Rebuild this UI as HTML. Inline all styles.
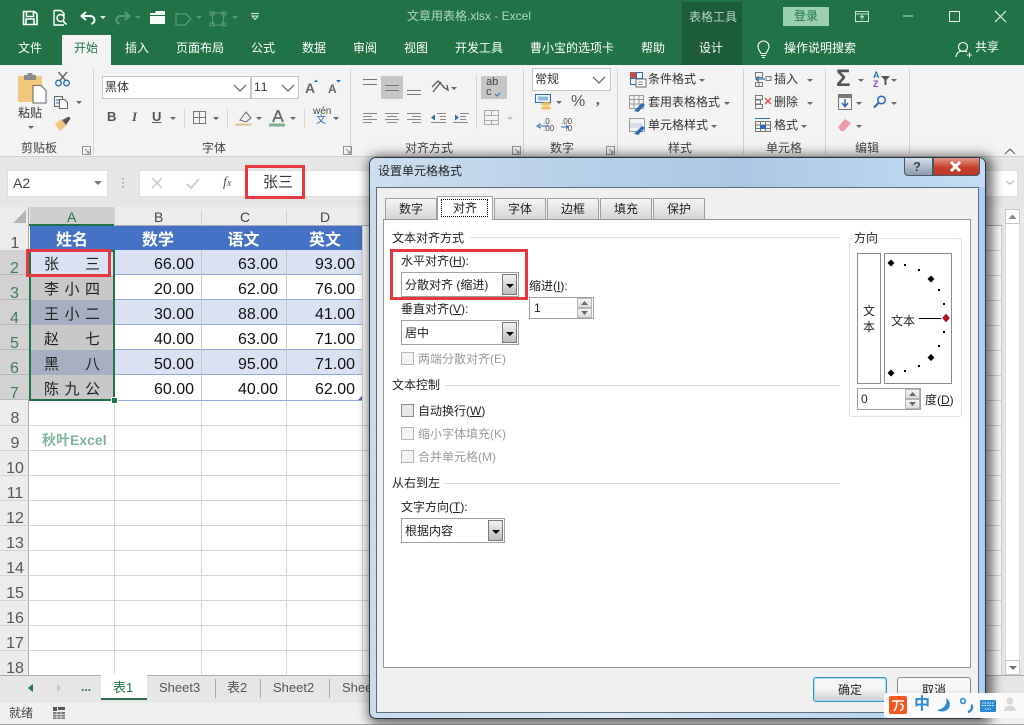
<!DOCTYPE html>
<html lang="zh"><head><meta charset="utf-8"><title>文章用表格.xlsx - Excel</title>
<style>
*{box-sizing:border-box;margin:0;padding:0}
html,body{width:1024px;height:725px;overflow:hidden;background:#fff}
body{position:relative;font:12px/16px "Liberation Sans","Noto Sans CJK SC",sans-serif;color:#333}
.t{position:absolute;white-space:nowrap}
.b{position:absolute}
svg{position:absolute;left:0;top:0;overflow:visible}
.g{position:absolute;background:#d4d4d4}
.tab{color:#fff;font-size:12px;top:40px}
.rl{top:140px;color:#444}
.rh{position:absolute;left:0;width:30px;text-align:center;font-size:16px;line-height:18px;color:#555}
.rh.s{color:#3f7a5c;background:#d2d2d2;border-bottom:1px solid #b8b8b8;width:29px}
.n{position:absolute;font-size:16px;line-height:20px;text-align:right;color:#111;width:60px}
.nm{position:absolute;left:44px;width:56px;font-size:15px;line-height:20px;color:#222;display:flex;justify-content:space-between}
.h{position:absolute;top:231px;font-size:16px;line-height:20px;color:#fff;font-weight:bold;text-align:center}
.dtab{position:absolute;top:198px;height:21px;width:52px;border:1px solid #9aa0a4;border-bottom:0;background:linear-gradient(#f5f5f5,#d6d6d6);text-align:center;line-height:20px;color:#222}
.d{color:#222}
.dis{color:#9a9a9a}
.sel{position:absolute;background:#fff;border:1px solid #a0a0a0;line-height:24px;padding-left:3px;color:#222}
.sel i{position:absolute;right:1px;top:1px;bottom:1px;width:15px;border:1px solid #777;background:linear-gradient(#f2f2f2,#bdbdbd)}
.sel i:after{content:"";position:absolute;left:3px;top:9px;border:4px solid transparent;border-top:4px solid #000;border-bottom:0}
.cb{position:absolute;left:401px;width:13px;height:13px;border:1px solid #b5b5b5;background:#f4f4f4}
.ln{position:absolute;height:1px;background:#dcdcdc}
u{text-decoration:underline}
</style></head><body>

<!-- Title bar -->
<div class="b" style="left:0;top:0;width:1024px;height:65px;background:#217346"></div>
<div class="b" style="left:682px;top:2px;width:60px;height:63px;background:#1d5c39"></div>
<div class="b" style="left:62px;top:35px;width:49px;height:30px;background:#f3f3f3"></div>
<div class="b" style="left:783px;top:7px;width:46px;height:19px;background:#9bd0ad"></div>
<div class="t" style="left:407px;top:8px;color:#b4d6c3">文章用表格.xlsx - Excel</div>
<div class="t" style="left:689px;top:9px;color:#b4d6c3">表格工具</div>
<div class="t" style="left:794px;top:8px;color:#217346">登录</div>
<div class="t tab" style="left:18px">文件</div>
<div class="t tab" style="left:74px;color:#217346">开始</div>
<div class="t tab" style="left:125px">插入</div>
<div class="t tab" style="left:176px">页面布局</div>
<div class="t tab" style="left:251px">公式</div>
<div class="t tab" style="left:302px">数据</div>
<div class="t tab" style="left:353px">审阅</div>
<div class="t tab" style="left:404px">视图</div>
<div class="t tab" style="left:455px">开发工具</div>
<div class="t tab" style="left:530px">曹小宝的选项卡</div>
<div class="t tab" style="left:641px">帮助</div>
<div class="t tab" style="left:699px">设计</div>
<div class="t tab" style="left:784px">操作说明搜索</div>
<div class="t tab" style="left:975px;top:39px">共享</div>

<!-- Ribbon -->
<div class="b" style="left:0;top:65px;width:1024px;height:92px;background:#f3f3f3;border-bottom:1px solid #d0d0d0"></div>
<div class="b" style="left:0;top:157px;width:1024px;height:50px;background:#e6e6e6"></div>
<div class="b" style="left:102px;top:76px;width:149px;height:23px;background:#fff;border:1px solid #c6c6c6"></div>
<div class="b" style="left:251px;top:76px;width:48px;height:23px;background:#fff;border:1px solid #c6c6c6"></div>
<div class="b" style="left:381px;top:76px;width:22px;height:23px;background:#c6c6c6"></div>
<div class="b" style="left:481px;top:76px;width:26px;height:23px;background:#c6c6c6"></div>
<div class="b" style="left:532px;top:68px;width:79px;height:23px;background:#fff;border:1px solid #c6c6c6"></div>
<div class="t" style="left:105px;top:79px">黑体</div>
<div class="t" style="left:254px;top:79px;letter-spacing:1px">11</div>
<div class="t" style="left:535px;top:71px">常规</div>
<div class="t" style="left:18px;top:105px">粘贴</div>
<div class="t" style="left:648px;top:71px">条件格式</div>
<div class="t" style="left:648px;top:94px">套用表格格式</div>
<div class="t" style="left:648px;top:117px">单元格样式</div>
<div class="t" style="left:774px;top:71px">插入</div>
<div class="t" style="left:774px;top:94px">删除</div>
<div class="t" style="left:774px;top:117px">格式</div>
<div class="t rl" style="left:21px">剪贴板</div>
<div class="t rl" style="left:202px">字体</div>
<div class="t rl" style="left:405px">对齐方式</div>
<div class="t rl" style="left:550px">数字</div>
<div class="t rl" style="left:668px">样式</div>
<div class="t rl" style="left:766px">单元格</div>
<div class="t rl" style="left:855px">编辑</div>
<div class="t" style="left:107px;top:109px;font:bold 13px/16px 'Liberation Sans';color:#555">B</div>
<div class="t" style="left:132px;top:109px;font:italic bold 13px/16px 'Liberation Serif';color:#555">I</div>
<div class="t" style="left:152px;top:109px;font:bold 13px/16px 'Liberation Sans';color:#555;text-decoration:underline">U</div>
<div class="t" style="left:305px;top:80px;font:bold 14px/16px 'Liberation Sans';color:#666">A</div>
<div class="t" style="left:328px;top:81px;font:bold 12px/16px 'Liberation Sans';color:#666">A</div>
<div class="t" style="left:313px;top:107px;font:10px/10px 'Liberation Sans';color:#444">wén</div>
<div class="t" style="left:316px;top:116px;font-size:10px;line-height:10px;color:#2a6cb0">文</div>
<div class="t" style="left:486px;top:77px;font:11px/10px 'Liberation Sans';color:#444">ab</div>
<div class="t" style="left:486px;top:87px;font:11px/10px 'Liberation Sans';color:#444">c</div>
<div class="t" style="left:571px;top:93px;font:16px/18px 'Liberation Sans';color:#555">%</div>
<div class="t" style="left:596px;top:91px;font:bold 15px/18px 'Liberation Serif';color:#555">,</div>
<div class="t" style="left:543px;top:118px;font:8px/7px 'Liberation Sans';color:#444">.0<br>.00</div>
<div class="t" style="left:561px;top:118px;font:8px/7px 'Liberation Sans';color:#444">.00<br>&nbsp;&nbsp;.0</div>
<div class="t" style="left:836px;top:68px;font:bold 24px/22px 'Liberation Sans';color:#555">Σ</div>
<div class="t" style="left:873px;top:71px;font:bold 9px/8px 'Liberation Sans';color:#2a6cb0">A</div>
<div class="t" style="left:873px;top:80px;font:bold 9px/8px 'Liberation Sans';color:#8a4fb0">Z</div>

<svg width="1024" height="725" viewBox="0 0 1024 725" fill="none">
<defs><path id="dd" d="M0 0h6l-3 3z" fill="#666"/><path id="dw" d="M0 0h6l-3 3z" fill="#dfeee6"/><path id="dg" d="M0 0h6l-3 3z" fill="#5c9a78"/><path id="ch" d="M0 0l6 6 6-6" stroke="#555" stroke-width="1.1"/></defs>
<!-- QAT -->
<path d="M23.500 11.500h11l2.500 2.500v10.500h-13.500zM26.500 12v4.500h7V12M26 24v-5h8v5" stroke="#fff" stroke-width="1.600"/>
<path d="M54 10.500h7l3 3v3M54 10.500v14.500h10" stroke="#fff" stroke-width="1.400"/><circle cx="60.500" cy="18" r="3.500" stroke="#fff" stroke-width="1.500"/><path d="M63 21l3.500 3.500" stroke="#fff" stroke-width="1.800"/>
<path d="M86 12l-4.500 4 4.500 4M82 16h8c3 0 4.500 2 4.500 4s-1 3-3 4" stroke="#fff" stroke-width="2"/><use href="#dw" x="100" y="16"/>
<path d="M125 12l4.500 4-4.500 4M129 16h-8c-3 0-4.500 2-4.500 4s1 3 3 4" stroke="#5c9a78" stroke-width="2"/><use href="#dg" x="135" y="16"/>
<path d="M150 13h5l1-2h9v13h-15z" fill="#f4fbf7"/><path d="M150 15.500h15" stroke="#217346"/>
<path d="M176 14h10l5 5-6 6h-9z" stroke="#5c9a78" stroke-width="1.300"/><use href="#dg" x="196" y="16"/>
<path d="M212 13h12l-1 12h-10zM210 12h4v3h-4zM222 12h4v3h-4zM210 23h4v3h-4zM222 23h4v3h-4z" stroke="#5c9a78"/><use href="#dg" x="232" y="16"/>
<path d="M251 13.500h8" stroke="#dfeee6" stroke-width="1"/><path d="M252 16h6l-3 3.500z" stroke="#dfeee6"/>
<!-- window controls -->
<path d="M855.500 11.500h13v10h-13zM855.500 14h13M862 20v-4M860 17.500l2-2 2 2" stroke="#cfe3d7"/>
<path d="M903 16h10" stroke="#cfe3d7"/><path d="M949.500 11.500h10v10h-10z" stroke="#e8f2ec"/>
<path d="M995 11l11 11M1006 11l-11 11" stroke="#e8f2ec" stroke-width="1.200"/>
<!-- bulb -->
<path d="M761 53.500c-.5-2-3-3.500-3-7a5.500 5.500 0 0 1 11 0c0 3.500-2.500 5-3 7zM761 55.500h5M762 57.500h3" stroke="#fff" stroke-width="1.100"/>
<!-- person -->
<circle cx="963" cy="47" r="4.500" stroke="#fff" stroke-width="1.100"/><path d="M956 57c.5-4 3-6 7-6 1.500 0 3 .5 4 1M967 55h5M969.500 52.500v5" stroke="#fff" stroke-width="1.100"/>
<!-- separators -->
<path d="M93.500 69v85M350.500 69v85M523.500 69v85M617.500 69v85M743.500 69v85M825.500 69v85M909.500 69v85" stroke="#d2d2d2"/>
<path d="M184.500 108v20M227.500 108v20M304.500 108v20M476.500 74v55" stroke="#d8d8d8"/>
<!-- launchers -->
<path d="M82.500 146.500h8v8h-8zM85 149l4 4M89 150.500v2.500h-2.500M343.500 146.500h8v8h-8zM346 149l4 4M350 150.500v2.500h-2.500M512.500 146.500h8v8h-8zM515 149l4 4M519 150.500v2.500h-2.500M606.500 146.500h8v8h-8zM609 149l4 4M613 150.500v2.500h-2.500" stroke="#777" stroke-width=".8"/>
<path d="M1005 154l5-5 5 5" stroke="#555"/>
<!-- paste -->
<path d="M18 76h24v26H18z" fill="#f0c77d"/><path d="M24 75h12v5H24zM27.500 73h5v3h-5z" fill="#8a8a8a"/><path d="M33 85.500h8l5 5v12.500H33z" fill="#fff" stroke="#666"/><use href="#dd" x="28" y="126"/>
<!-- cut -->
<path d="M58.500 72l7 8.500M67 72l-7 8.500" stroke="#666" stroke-width="1.400"/><circle cx="58.500" cy="83" r="2.800" stroke="#2a6cb0" stroke-width="1.300"/><circle cx="66.500" cy="83" r="2.800" stroke="#2a6cb0" stroke-width="1.300"/>
<!-- copy -->
<path d="M54.500 96.500h8v10h-8z" stroke="#666" fill="#f3f3f3"/><path d="M59.500 99.500h5l3 3v6h-8z" stroke="#666" fill="#fff"/><path d="M56 100h3M56 103h3" stroke="#2a6cb0"/><use href="#dd" x="76" y="101"/>
<!-- brush -->
<path d="M55 124.500l6-5.500 6 6-7 6z" fill="#f0c77d"/><path d="M62 120l7-3.500 1.500 2-4.500 6.500z" fill="#555"/>
<!-- combos -->
<use href="#ch" x="234" y="85"/><use href="#ch" x="282" y="85"/><use href="#ch" x="593" y="77"/>
<path d="M314 82l2-2.500 2 2.500z" fill="#2a6cb0"/><path d="M336 80h5l-2.500 2.500z" fill="#2a6cb0"/>
<use href="#dd" x="170" y="117"/><path d="M193.500 111.500h12v12h-12zM199.500 111.500v12M193.500 117.500h12" stroke="#777"/><use href="#dd" x="213" y="117"/>
<path d="M240 120l6-8 5 6-5 4zM236 125h14" stroke="#666"/><path d="M235 123.500h17v2h-17z" fill="#f0c77d" opacity=".7"/><use href="#dd" x="256" y="117"/>
<path d="M273 122l4.500-11h1l4.500 11M275 118h6" stroke="#666" stroke-width="1.800"/><path d="M269 123.500h16v3h-16z" fill="#7fb090"/><use href="#dd" x="290" y="117"/><use href="#dd" x="333" y="117"/>
<!-- alignment -->
<path d="M363 79.500h14M363 84.500h14M385 85.500h14M385 90.500h14M407 90.500h14M407 94.500h14" stroke="#777"/>
<path d="M433 92l8-10M432 87l6-6 6 6M443 87l5 3-1-5" stroke="#555" stroke-width="1.300"/><use href="#dd" x="451" y="87"/>
<path d="M363 113.500h14M363 116.500h9M363 119.500h14M363 122.500h9M385 113.500h14M387 116.500h10M385 119.500h14M387 122.500h10M407 113.500h14M412 116.500h9M407 119.500h14M412 122.500h9" stroke="#888"/>
<path d="M437 113.500h9M440 116.500h6M440 119.500h6M431 122.500h15M460 113.500h9M460 116.500h6M460 119.500h6M453 122.500h15" stroke="#888"/>
<path d="M431 117.500l4-3v6z" fill="#2a6cb0"/><path d="M459 117.500l-4-3v6z" fill="#2a6cb0"/>
<path d="M484.500 110.500h14v14h-14zM484.500 115.500h14M484.500 120.500h14M491.500 110.500v5M491.500 120.500v4" stroke="#aaa"/>
<path d="M507 117h6l-3 3z" fill="#bbb"/>
<path d="M495 94l2 2 3-3" stroke="#2a6cb0"/>
<!-- number -->
<path d="M535.500 94.500h15v8h-15z" stroke="#2a6cb0"/><path d="M538 96.500h10v4h-10z" fill="#8fb8dc"/><ellipse cx="546" cy="104" rx="5" ry="1.800" fill="#f0c060"/><ellipse cx="546" cy="108" rx="5" ry="1.800" fill="#f0c060"/><use href="#dd" x="556" y="101"/>
<path d="M541 126h7M537 126l3-2v4zM547 127" stroke="#2a6cb0"/><path d="M561 127h7l-2-2M568 127l-2 2" stroke="#2a6cb0"/>
<!-- styles -->
<path d="M630 72h6v6h-6z" fill="#c0504d"/><path d="M636.500 72.500h6v6h-6zM630.500 78.500h6v6h-6z" stroke="#2a6cb0"/><path d="M636 79h10v8h-10z" fill="#fff" stroke="#666"/><path d="M638 82h5M638 84.500h5" stroke="#666" stroke-width=".8"/>
<path d="M629.500 95.500h14v13h-14zM629.500 99.500h14M629.500 104h14M634 95.500v13M639 95.500v13" stroke="#999"/><path d="M634 111l8-8 3 2-7 7z" fill="#2a6cb0"/>
<path d="M629.500 118.500h15v13h-15z" stroke="#999"/><path d="M630 123h12v5h-12z" fill="#d6dfe8"/><path d="M634 134l8-8 3 2-7 7z" fill="#2a6cb0"/>
<use href="#dd" x="699" y="79"/><use href="#dd" x="724" y="102"/><use href="#dd" x="711" y="125"/>
<!-- cells -->
<path d="M755.500 72.500h7v5h-7zM755.500 82.500h7v4h-7zM755.500 82v4M766 76.500h5v4h-5zM759 86.500v-4" stroke="#777"/><path d="M756 79h9M759 76.500l-3 2.500 3 2.500" stroke="#2a6cb0" stroke-width="1.200"/>
<path d="M755.500 95.500h7v4h-7zM755.500 104.500h7v4h-7zM755.500 100h5v4h-5z" stroke="#777"/><path d="M765 98l6 6M771 98l-6 6" stroke="#e05050" stroke-width="1.400"/>
<path d="M755.500 121.500h15v10h-15zM755.500 125h15M755.500 128.500h15M760.500 121.500v10M765.500 121.500v10" stroke="#777"/><path d="M760 125h6v4h-6z" fill="#2a6cb0"/><path d="M755 118.500h15" stroke="#2a6cb0"/>
<use href="#dd" x="807" y="79"/><use href="#dd" x="807" y="102"/><use href="#dd" x="801" y="125"/>
<!-- edit -->
<use href="#dd" x="858" y="79"/><path d="M881 76h9l-3.500 4v5h-2v-5z" fill="#555"/><use href="#dd" x="891" y="79"/>
<path d="M838.500 94.500h13v15h-13z" stroke="#777"/><path d="M838 94h14v4h-14z" fill="#777"/><path d="M845 99v7M842 103l3 3.500 3-3.500" stroke="#2a6cb0" stroke-width="1.500"/><use href="#dd" x="856" y="102"/>
<circle cx="881.500" cy="100" r="3.800" stroke="#2a6cb0" stroke-width="1.500"/><path d="M878.500 103l-4.500 4.500" stroke="#2a6cb0" stroke-width="2"/><use href="#dd" x="891" y="102"/>
<path d="M838 127l7-8 6 4-7 8h-3z" fill="#ef9aa8"/><use href="#dd" x="856" y="125"/>
</svg>

<!-- Formula bar -->
<div class="b" style="left:7px;top:170px;width:101px;height:27px;background:#fff;border:1px solid #dedede"></div>
<div class="t" style="left:13px;top:175px;font-size:14px;color:#444">A2</div>
<div class="b" style="left:139px;top:170px;width:879px;height:27px;background:#fff;border:1px solid #dedede"></div>
<div class="b" style="left:245px;top:170px;width:1px;height:27px;background:#dedede"></div>
<div class="t" style="left:263px;top:172px;font-size:15px;line-height:22px;color:#333">张三</div>
<div class="t" style="left:223px;top:175px;font:italic 14px/16px 'Liberation Serif';color:#555">f<span style="font-size:10px">x</span></div>
<svg width="1024" height="725" viewBox="0 0 1024 725" fill="none">
<path d="M94 181h8l-4 4z" fill="#777"/>
<path d="M123 178v1.500M123 182v1.500M123 186v1.500" stroke="#999" stroke-width="1.500"/>
<path d="M152 178l10 10M162 178l-10 10" stroke="#cfcfcf" stroke-width="1.800"/>
<path d="M187 184l4 4 8-9" stroke="#cfcfcf" stroke-width="2"/>
<path d="M1006 181l4 3 4-3" stroke="#bbb" stroke-width="1.400"/>
</svg>
<div class="b" style="left:245px;top:165px;width:60px;height:34px;border:3px solid #e5383f"></div>

<!-- Grid -->
<div class="b" style="left:0;top:207px;width:1024px;height:496px;background:#fff"></div>
<div class="b" style="left:0;top:207px;width:1024px;height:19px;background:#ececec;border-bottom:1px solid #ababab"></div>
<div class="b" style="left:0;top:207px;width:29px;height:468px;background:#ececec;border-right:1px solid #ababab"></div>
<div class="b" style="left:30px;top:207px;width:85px;height:18px;background:#cfcfcf"></div>
<div class="b" style="left:29px;top:224px;width:86px;height:2px;background:#217346"></div>
<svg width="1024" height="725" viewBox="0 0 1024 725"><path d="M26 210v13H13z" fill="#b5b5b5"/></svg>
<div class="t" style="left:67px;top:209px;font-size:14px;color:#217346">A</div>
<div class="t" style="left:154px;top:209px;font-size:14px;color:#444">B</div>
<div class="t" style="left:240px;top:209px;font-size:14px;color:#444">C</div>
<div class="t" style="left:320px;top:209px;font-size:14px;color:#444">D</div>
<div class="g" style="left:201px;top:210px;width:1px;height:465px"></div>
<div class="g" style="left:286px;top:210px;width:1px;height:465px"></div>
<div class="g" style="left:114px;top:210px;width:1px;height:465px"></div>
<div class="g" style="left:362px;top:226px;width:1px;height:449px"></div>
<div class="g" style="left:0;top:425px;width:370px;height:1px"></div>
<div class="g" style="left:0;top:450px;width:370px;height:1px"></div>
<div class="g" style="left:0;top:475px;width:370px;height:1px"></div>
<div class="g" style="left:0;top:500px;width:370px;height:1px"></div>
<div class="g" style="left:0;top:525px;width:370px;height:1px"></div>
<div class="g" style="left:0;top:550px;width:370px;height:1px"></div>
<div class="g" style="left:0;top:575px;width:370px;height:1px"></div>
<div class="g" style="left:0;top:600px;width:370px;height:1px"></div>
<div class="g" style="left:0;top:625px;width:370px;height:1px"></div>
<div class="g" style="left:0;top:650px;width:370px;height:1px"></div>
<!-- table fills -->
<div class="b" style="left:30px;top:226px;width:332px;height:24px;background:#4472c4"></div>
<div class="b" style="left:115px;top:250px;width:247px;height:25px;background:#d9e1f2;border-bottom:1px solid #8ea9db"></div>
<div class="b" style="left:115px;top:275px;width:247px;height:25px;background:#fff;border-bottom:1px solid #8ea9db"></div>
<div class="b" style="left:115px;top:300px;width:247px;height:25px;background:#d9e1f2;border-bottom:1px solid #8ea9db"></div>
<div class="b" style="left:115px;top:325px;width:247px;height:25px;background:#fff;border-bottom:1px solid #8ea9db"></div>
<div class="b" style="left:115px;top:350px;width:247px;height:25px;background:#d9e1f2;border-bottom:1px solid #8ea9db"></div>
<div class="b" style="left:115px;top:375px;width:247px;height:26px;background:#fff;border-bottom:1px solid #8ea9db"></div>
<div class="g" style="left:201px;top:250px;width:1px;height:150px;background:#c4c8d0"></div>
<div class="g" style="left:286px;top:250px;width:1px;height:150px;background:#c4c8d0"></div>
<div class="b" style="left:30px;top:250px;width:84px;height:25px;background:#d9e1f2"></div>
<div class="b" style="left:30px;top:275px;width:84px;height:25px;background:#c8c8c8"></div>
<div class="b" style="left:30px;top:300px;width:84px;height:25px;background:#a6b0c2"></div>
<div class="b" style="left:30px;top:325px;width:84px;height:25px;background:#c8c8c8"></div>
<div class="b" style="left:30px;top:350px;width:84px;height:25px;background:#a6b0c2"></div>
<div class="b" style="left:30px;top:375px;width:84px;height:25px;background:#c8c8c8"></div>
<!-- row heads -->
<div class="rh" style="top:235px">1</div>
<div class="rh s" style="top:250px;height:25px;line-height:38px;overflow:hidden">2</div>
<div class="rh s" style="top:275px;height:25px;line-height:38px;overflow:hidden">3</div>
<div class="rh s" style="top:300px;height:25px;line-height:38px;overflow:hidden">4</div>
<div class="rh s" style="top:325px;height:25px;line-height:38px;overflow:hidden">5</div>
<div class="rh s" style="top:350px;height:25px;line-height:38px;overflow:hidden">6</div>
<div class="rh s" style="top:375px;height:25px;line-height:38px;overflow:hidden">7</div>
<div class="rh" style="top:410px">8</div>
<div class="rh" style="top:435px">9</div>
<div class="rh" style="top:460px">10</div>
<div class="rh" style="top:485px">11</div>
<div class="rh" style="top:510px">12</div>
<div class="rh" style="top:535px">13</div>
<div class="rh" style="top:560px">14</div>
<div class="rh" style="top:585px">15</div>
<div class="rh" style="top:610px">16</div>
<div class="rh" style="top:635px">17</div>
<div class="rh" style="top:660px">18</div>
<!-- header texts -->
<div class="h" style="left:30px;width:84px;letter-spacing:0">姓名</div>
<div class="h" style="left:115px;width:86px">数学</div>
<div class="h" style="left:201px;width:85px">语文</div>
<div class="h" style="left:286px;width:78px">英文</div>
<!-- names -->
<div class="nm" style="top:255px"><span>张</span><span>三</span></div>
<div class="nm" style="top:280px"><span>李</span><span>小</span><span>四</span></div>
<div class="nm" style="top:305px"><span>王</span><span>小</span><span>二</span></div>
<div class="nm" style="top:330px"><span>赵</span><span>七</span></div>
<div class="nm" style="top:355px"><span>黑</span><span>八</span></div>
<div class="nm" style="top:380px"><span>陈</span><span>九</span><span>公</span></div>
<!-- numbers -->
<div class="n" style="left:134px;top:255px">66.00</div><div class="n" style="left:218px;top:255px">63.00</div><div class="n" style="left:295px;top:255px">93.00</div>
<div class="n" style="left:134px;top:280px">20.00</div><div class="n" style="left:218px;top:280px">62.00</div><div class="n" style="left:295px;top:280px">76.00</div>
<div class="n" style="left:134px;top:305px">30.00</div><div class="n" style="left:218px;top:305px">88.00</div><div class="n" style="left:295px;top:305px">41.00</div>
<div class="n" style="left:134px;top:330px">40.00</div><div class="n" style="left:218px;top:330px">63.00</div><div class="n" style="left:295px;top:330px">71.00</div>
<div class="n" style="left:134px;top:355px">50.00</div><div class="n" style="left:218px;top:355px">95.00</div><div class="n" style="left:295px;top:355px">71.00</div>
<div class="n" style="left:134px;top:380px">60.00</div><div class="n" style="left:218px;top:380px">40.00</div><div class="n" style="left:295px;top:380px">62.00</div>
<!-- selection -->
<div class="b" style="left:29px;top:250px;width:86px;height:151px;border:2px solid #217346"></div>
<div class="b" style="left:112px;top:398px;width:5px;height:5px;background:#217346;outline:1px solid #fff"></div>
<div class="b" style="left:358px;top:396px;width:4px;height:4px;background:#4a5cc0;clip-path:polygon(100% 0,100% 100%,0 100%)"></div>
<div class="b" style="left:26px;top:249px;width:85px;height:28px;border:3px solid #e5383f"></div>
<div class="t" style="left:42px;top:431px;font-size:14px;line-height:18px;font-weight:bold;color:#7fb39a">秋叶Excel</div>

<!-- right of dialog -->
<div class="b" style="left:980px;top:226px;width:22px;height:449px;background:repeating-linear-gradient(#fff 0 24px,#d4d4d4 24px 25px);border-right:1px solid #d0d0d0"></div>
<div class="b" style="left:1002px;top:207px;width:22px;height:468px;background:#e8e8e8"></div>
<div class="b" style="left:1005px;top:209px;width:15px;height:466px;background:#fff;border:1px solid #dcdcdc"></div>
<div class="b" style="left:1005px;top:209px;width:15px;height:15px;background:#fff;border:1px solid #c8c8c8"></div>
<div class="b" style="left:1005px;top:660px;width:15px;height:15px;background:#fff;border:1px solid #c8c8c8"></div>
<svg width="1024" height="725" viewBox="0 0 1024 725"><path d="M1008.500 219l4-4.500 4 4.500z" fill="#888"/><path d="M1009 666h8l-4 4z" fill="#777"/><path d="M992 684l5 4-5 4z" fill="#777"/></svg>

<!-- Sheet tabs -->
<div class="b" style="left:0;top:675px;width:1024px;height:28px;background:#e6e6e6;border-top:1px solid #ababab"></div>
<div class="b" style="left:101px;top:674px;width:46px;height:26px;background:#fff;border-bottom:2px solid #2f6f4e"></div>
<div class="t" style="left:113px;top:679px;font-size:13px;line-height:18px;color:#217346">表1</div>
<div class="t" style="left:159px;top:679px;font-size:13px;line-height:18px;color:#555">Sheet3</div>
<div class="t" style="left:227px;top:679px;font-size:13px;line-height:18px;color:#555">表2</div>
<div class="t" style="left:273px;top:679px;font-size:13px;line-height:18px;color:#555">Sheet2</div>
<div class="t" style="left:342px;top:679px;font-size:13px;line-height:18px;color:#555">Shee</div>
<div class="t" style="left:81px;top:679px;font-weight:bold;color:#217346">...</div>
<svg width="1024" height="725" viewBox="0 0 1024 725"><path d="M33 684v8l-5-4z" fill="#217346"/><path d="M57 684v8l4-4z" fill="#c8c8c8"/><path d="M215.500 679v19M260.500 679v19M329.500 679v19" stroke="#aaa"/></svg>
<div class="b" style="left:0;top:703px;width:1024px;height:22px;background:#f0f0f0;border-bottom:1px solid #aaa"></div>
<div class="t" style="left:9px;top:705px;color:#444">就绪</div>
<svg width="1024" height="725" viewBox="0 0 1024 725" fill="none"><path d="M53 707h4v4h-4z" fill="#555"/><path d="M58 707h7v3h-7z" fill="#555"/><path d="M53 712h12v7H53z" fill="#777"/><path d="M53 714.500h12M53 717h12M57 712v7M61 712v7" stroke="#f0f0f0" stroke-width=".8"/></svg>

<!-- Dialog -->
<div class="b" style="left:369px;top:157px;width:617px;height:562px;border:1px solid #2a3642;border-radius:7px;background:linear-gradient(90deg,#c9dcee 0%,#dbe8f4 40%,#a9cfef 100%);box-shadow:3px 2px 11px 4px rgba(0,0,0,.55)"></div>
<div class="b" style="left:370px;top:158px;width:615px;height:29px;border-radius:6px 6px 0 0;background:linear-gradient(90deg,#cddff0 0%,#b8d2ea 30%,#aac8e5 60%,#c2ddf5 100%)"></div>
<div class="b" style="left:376px;top:187px;width:603px;height:526px;background:#f0f0f0;border:1px solid #5f6d7a"></div>
<div class="t" style="left:378px;top:163px;color:#222">设置单元格格式</div>
<div class="b" style="left:904px;top:158px;width:29px;height:18px;background:linear-gradient(#d5dfe9,#8c9dad);border:1px solid #4a5866;border-top:0;border-radius:0 0 0 4px"></div>
<div class="b" style="left:933px;top:158px;width:47px;height:18px;background:linear-gradient(#e2998c,#c8402c 55%,#b8382a);border:1px solid #4a5866;border-top:0;border-radius:0 0 4px 0"></div>
<div class="t" style="left:913px;top:158px;font:bold 13px/17px 'Liberation Sans';color:#3a4652">?</div>
<svg width="1024" height="725" viewBox="0 0 1024 725"><path d="M951 162l9 9M960 162l-9 9" stroke="#fff" stroke-width="3"/></svg>
<div class="b" style="left:383px;top:219px;width:588px;height:449px;background:#fff;border:1px solid #8e9aa0"></div>
<div class="dtab" style="left:385px">数字</div>
<div class="dtab" style="left:494px">字体</div>
<div class="dtab" style="left:547px">边框</div>
<div class="dtab" style="left:600px">填充</div>
<div class="dtab" style="left:653px">保护</div>
<div class="dtab" style="left:437px;top:196px;height:24px;width:56px;background:#fff;line-height:22px">对齐</div>
<div class="b" style="left:441px;top:199px;width:47px;height:18px;border:1px dotted #000"></div>

<div class="t d" style="left:392px;top:230px">文本对齐方式</div><div class="ln" style="left:470px;top:237px;width:370px"></div>
<div class="t d" style="left:401px;top:253px">水平对齐(<u>H</u>):</div>
<div class="sel" style="left:401px;top:272px;width:118px;height:25px">分散对齐 (缩进)<i></i></div>
<div class="t d" style="left:529px;top:278px">缩进(<u>I</u>):</div>
<div class="sel" style="left:529px;top:297px;width:65px;height:22px;line-height:20px;padding-left:4px">1</div>
<div class="t d" style="left:401px;top:301px">垂直对齐(<u>V</u>):</div>
<div class="sel" style="left:401px;top:320px;width:118px;height:25px">居中<i></i></div>
<div class="cb" style="top:352px"></div><div class="t dis" style="left:418px;top:351px">两端分散对齐(E)</div>
<div class="t d" style="left:392px;top:377px">文本控制</div><div class="ln" style="left:444px;top:385px;width:396px"></div>
<div class="cb" style="top:404px;border-color:#8a8a8a;background:#e8e8e8"></div><div class="t d" style="left:418px;top:403px">自动换行(<u>W</u>)</div>
<div class="cb" style="top:427px"></div><div class="t dis" style="left:418px;top:426px">缩小字体填充(K)</div>
<div class="cb" style="top:450px"></div><div class="t dis" style="left:418px;top:449px">合并单元格(M)</div>
<div class="t d" style="left:392px;top:475px">从右到左</div><div class="ln" style="left:444px;top:483px;width:396px"></div>
<div class="t d" style="left:401px;top:499px">文字方向(<u>T</u>):</div>
<div class="sel" style="left:401px;top:518px;width:104px;height:25px">根据内容<i></i></div>

<div class="b" style="left:849px;top:238px;width:113px;height:179px;border:1px solid #e0e0e0;border-radius:3px"></div>
<div class="t d" style="left:853px;top:230px;background:#fff;padding:0 1px">方向</div>
<div class="b" style="left:857px;top:253px;width:24px;height:131px;border:1px solid #8a8a8a"></div>
<div class="b" style="left:884px;top:253px;width:68px;height:131px;border:1px solid #8a8a8a"></div>
<div class="t d" style="left:863px;top:303px">文</div><div class="t d" style="left:863px;top:319px">本</div>
<div class="t d" style="left:891px;top:313px">文本</div>
<svg width="1024" height="725" viewBox="0 0 1024 725">
<path d="M919 318.500h22" stroke="#000"/>
<path d="M946 314l3.500 4-3.500 4-3.500-4z" fill="#c01020" stroke="#400" stroke-width=".5"/>
<g fill="#000"><path d="M891 259.500l3.500 3.500-3.500 3.500-3.500-3.500zM931 275.500l3.500 3.500-3.500 3.500-3.500-3.500zM931 354l3.500 3.500-3.500 3.500-3.500-3.500zM891 369.500l3.500 3.500-3.500 3.500-3.500-3.500z"/>
<rect x="904" y="264" width="2" height="2"/><rect x="918" y="269" width="2" height="2"/><rect x="938" y="289" width="2" height="2"/><rect x="943" y="303" width="2" height="2"/><rect x="943" y="331" width="2" height="2"/><rect x="938" y="345" width="2" height="2"/><rect x="918" y="365" width="2" height="2"/><rect x="904" y="370" width="2" height="2"/></g>
</svg>
<div class="sel" style="left:857px;top:388px;width:64px;height:22px;line-height:20px;padding-left:3px">0</div>
<div class="t d" style="left:925px;top:392px">度(<u>D</u>)</div>
<!-- spin buttons -->
<div class="b" style="left:577px;top:298px;width:15px;height:10px;background:linear-gradient(#f5f5f5,#dcdcdc);border:1px solid #b5b5b5"></div>
<div class="b" style="left:577px;top:308px;width:15px;height:10px;background:linear-gradient(#f5f5f5,#dcdcdc);border:1px solid #b5b5b5"></div>
<div class="b" style="left:905px;top:389px;width:15px;height:10px;background:linear-gradient(#f5f5f5,#dcdcdc);border:1px solid #b5b5b5"></div>
<div class="b" style="left:905px;top:399px;width:15px;height:10px;background:linear-gradient(#f5f5f5,#dcdcdc);border:1px solid #b5b5b5"></div>
<svg width="1024" height="725" viewBox="0 0 1024 725" fill="#667"><path d="M581 305l3.500-4 3.500 4zM581 311l3.500 4 3.500-4zM909 396l3.500-4 3.500 4zM909 402l3.500 4 3.500-4z"/></svg>
<!-- red box dialog -->
<div class="b" style="left:390px;top:249px;width:138px;height:51px;border:3px solid #e5383f"></div>
<!-- buttons -->
<div class="b" style="left:813px;top:677px;width:74px;height:25px;border:1px solid #3a8fb8;border-radius:3px;background:linear-gradient(#f6f6f6 45%,#cfcfcf);box-shadow:inset 0 0 0 1px #a8dcf0;text-align:center;line-height:24px;color:#222">确定</div>
<div class="b" style="left:897px;top:677px;width:74px;height:25px;border:1px solid #8a8a8a;border-radius:3px;background:linear-gradient(#f6f6f6 45%,#cfcfcf);text-align:center;line-height:24px;color:#222">取消</div>

<!-- IME bar -->
<div class="b" style="left:884px;top:693px;width:140px;height:25px;background:#fafafa;border-radius:3px 0 0 3px"></div>
<div class="b" style="left:889px;top:696px;width:18px;height:18px;background:#f4561f;border-radius:2px"></div>
<div class="t" style="left:914px;top:695px;font-size:16px;line-height:20px;font-weight:bold;color:#2a8ad4">中</div>
<svg width="1024" height="725" viewBox="0 0 1024 725" fill="none">
<path d="M892 701h12M897 701c0 4-1 8-3 10M900 704c2 0 3 1 3 3s-1 3-3 4" stroke="#fff" stroke-width="1.500"/>
<path d="M946 698c2 6-2 11-9 12 3 2 7 2 10 0 4-3 4-9-1-12z" fill="#2a8ad4"/>
<circle cx="963" cy="701" r="2.400" stroke="#2a8ad4" stroke-width="1.600"/>
<path d="M971 705c2 1 1 6-3 7" stroke="#2a8ad4" stroke-width="2.400"/>
<rect x="980" y="700" width="16" height="12" rx="1" fill="#2a8ad4"/>
<path d="M982 703h12M982 705.500h12M985 709h6" stroke="#fff" stroke-dasharray="1.500 1"/>
<circle cx="1010" cy="701" r="3.500" fill="#d8d8d8"/><path d="M1004 711c0-4 3-5.500 6-5.500s6 1.500 6 5.500z" fill="#d8d8d8"/>
</svg>
</body></html>
